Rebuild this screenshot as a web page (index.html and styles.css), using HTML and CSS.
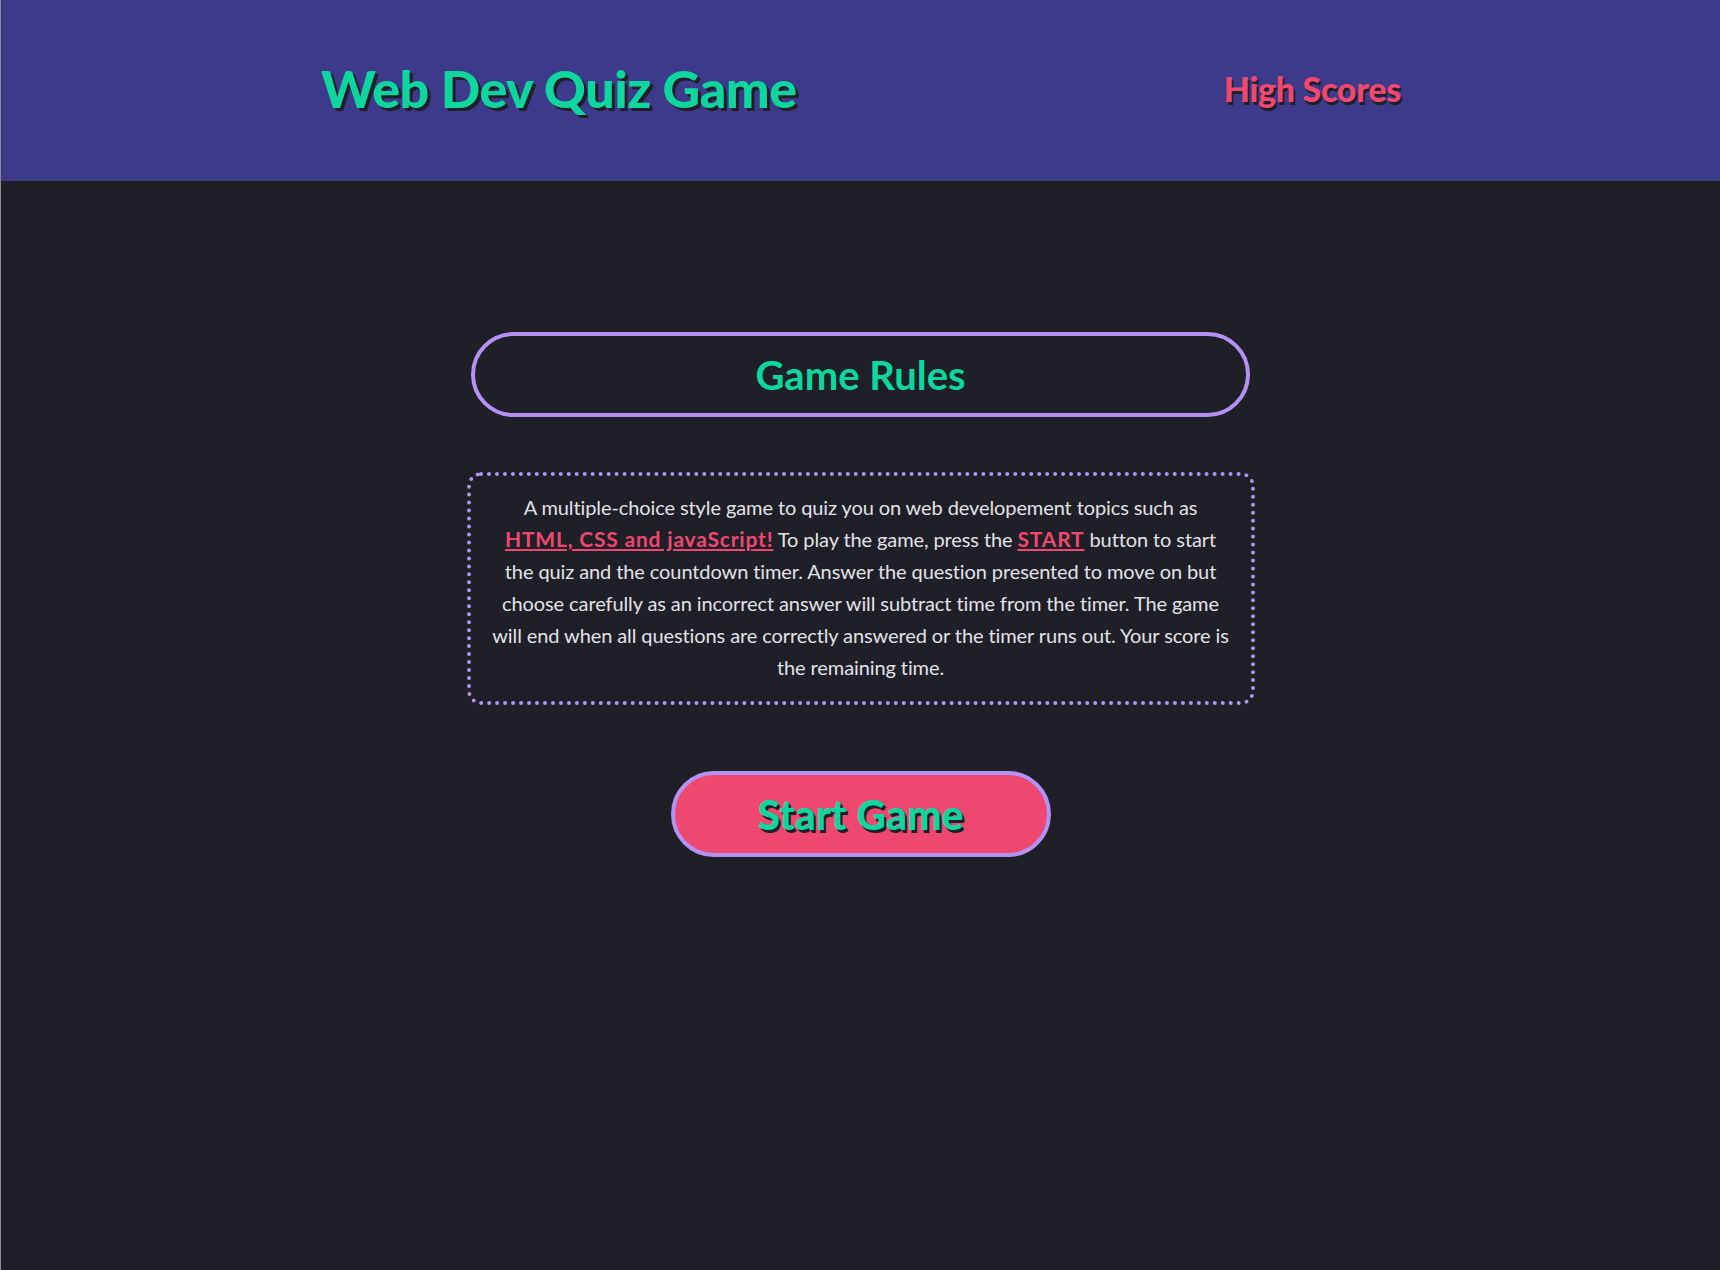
FILE: index.html
```html
<!DOCTYPE html>
<html lang="en">
<head>
<meta charset="utf-8">
<title>Web Dev Quiz Game</title>
<link rel="stylesheet" href="styles.css">
</head>
<body>
<header class="top-bar">
  <h1 class="site-title">Web Dev Quiz Game</h1>
  <a class="high-scores" href="#">High Scores</a>
</header>
<main class="content">
  <h2 class="rules-title">Game Rules</h2>
  <p class="rules-text">A multiple-choice style game to quiz you on web developement topics such as<br><a class="hl" href="#">HTML, CSS and javaScript!</a> To play the game, press the <a class="hl" href="#">START</a> button to start<br>the quiz and the countdown timer. Answer the question presented to move on but<br>choose carefully as an incorrect answer will subtract time from the timer. The game<br>will end when all questions are correctly answered or the timer runs out. Your score is<br>the remaining time.</p>
  <button class="start-btn" type="button">Start Game</button>
</main>
</body>
</html>
```
FILE: styles.css
```css
html, body {
  margin: 0;
  padding: 0;
}
body {
  background: #1f1f27;
  min-height: 1270px;
  font-family: "Lato", "Open Sans", sans-serif;
  border-left: 1px solid #8a8a8a;
  box-sizing: border-box;
}
.top-bar {
  height: 181px;
  background: #3d3a8b;
  display: flex;
  align-items: center;
  justify-content: space-between;
  padding: 0 319px 0 320px;
  box-sizing: border-box;
}
.site-title {
  margin: 0 0 6px 0;
  font-size: 52px;
  font-weight: 900;
  color: #0fd69e;
  text-shadow: 3px 3px 0 #1f1f27;
  letter-spacing: -0.5px;
}
.high-scores {
  margin-bottom: 4px;
  font-size: 34px;
  font-weight: 900;
  color: #ef4870;
  text-decoration: none;
  text-shadow: 2px 3px 0 #1f1f27;
  letter-spacing: -0.3px;
}
.content {
  display: flex;
  flex-direction: column;
  align-items: center;
  padding-top: 151px;
}
.rules-title {
  margin: 0;
  width: 779px;
  height: 85px;
  box-sizing: border-box;
  border: 4px solid #b392f4;
  border-radius: 60px;
  display: flex;
  align-items: center;
  justify-content: center;
  font-size: 40px;
  font-weight: 700;
  color: #0fd69e;
}
.rules-text {
  margin: 55px 0 0 0;
  width: 788px;
  box-sizing: border-box;
  border: 4px dotted #b392f4;
  border-radius: 14px;
  padding: 15px 10px 18px;
  text-align: center;
  white-space: nowrap;
  color: #e2e2e6;
  font-size: 20px;
  line-height: 32px;
  letter-spacing: -0.1px;
}
.hl {
  color: #ef4870;
  font-size: 21px;
  font-weight: 700;
  letter-spacing: 0.8px;
  text-decoration: underline;
}
.start-btn {
  margin-top: 66px;
  width: 380px;
  height: 86px;
  box-sizing: border-box;
  background: #ef4870;
  border: 4px solid #b392f4;
  border-radius: 60px;
  font-family: "Lato", "Open Sans", sans-serif;
  font-size: 41px;
  font-weight: 900;
  color: #0fd69e;
  text-shadow: 2px 3px 0 #1f1f27;
  cursor: pointer;
}
```
